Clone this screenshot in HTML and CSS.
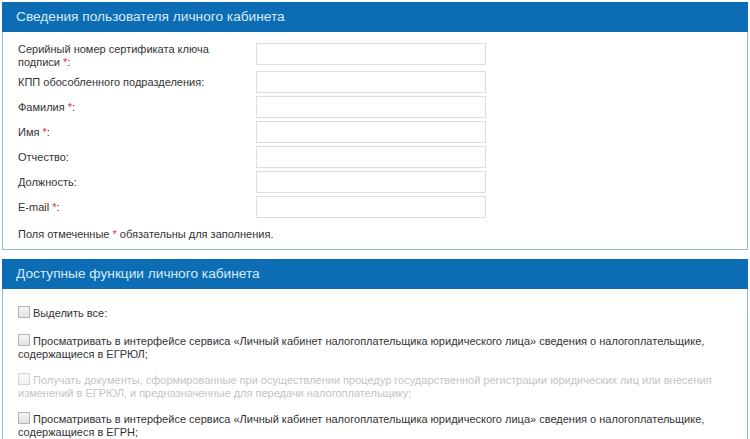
FILE: index.html
```html
<!DOCTYPE html>
<html lang="ru">
<head>
<meta charset="utf-8">
<link rel="stylesheet" href="styles.css">
</head>
<body>
<section class="panel">
  <div class="panel-head">Сведения пользователя личного кабинета</div>
  <div class="panel-body form">
    <div class="row row-top">
      <label class="lbl">Серийный номер сертификата ключа подписи <span class="req">*</span>:</label>
      <input class="inp" type="text">
    </div>
    <div class="row">
      <label class="lbl">КПП обособленного подразделения:</label>
      <input class="inp" type="text">
    </div>
    <div class="row">
      <label class="lbl">Фамилия <span class="req">*</span>:</label>
      <input class="inp" type="text">
    </div>
    <div class="row">
      <label class="lbl">Имя <span class="req">*</span>:</label>
      <input class="inp" type="text">
    </div>
    <div class="row">
      <label class="lbl">Отчество:</label>
      <input class="inp" type="text">
    </div>
    <div class="row">
      <label class="lbl">Должность:</label>
      <input class="inp" type="text">
    </div>
    <div class="row">
      <label class="lbl">E-mail <span class="req">*</span>:</label>
      <input class="inp" type="text">
    </div>
    <p class="note">Поля отмеченные <span class="req">*</span> обязательны для заполнения.</p>
  </div>
</section>
<section class="panel panel2">
  <div class="panel-head">Доступные функции личного кабинета</div>
  <div class="panel-body funcs">
    <div class="item item-all"><span class="cb"></span>Выделить все:</div>
    <div class="item"><span class="cb"></span>Просматривать в интерфейсе сервиса «Личный кабинет налогоплательщика юридического лица» сведения о налогоплательщике, содержащиеся в ЕГРЮЛ;</div>
    <div class="item disabled"><span class="cb"></span>Получать документы, сформированные при осуществлении процедур государственной регистрации юридических лиц или внесения изменений в ЕГРЮЛ, и предназначенные для передачи налогоплательщику;</div>
    <div class="item"><span class="cb"></span>Просматривать в интерфейсе сервиса «Личный кабинет налогоплательщика юридического лица» сведения о налогоплательщике, содержащиеся в ЕГРН;</div>
  </div>
</section>
</body>
</html>
```
FILE: styles.css
```css
html, body {
  margin: 0;
  padding: 0;
  background: #ffffff;
}
body {
  padding: 2px 2px 0 2px;
  font-family: "Liberation Sans", Arial, sans-serif;
  font-size: 11px;
  color: #333333;
  overflow: hidden;
  height: 437px;
}
.panel {
  border: 1px solid #8fbcd8;
  border-top: none;
  background: #ffffff;
}
.panel2 {
  margin-top: 9px;
}
.panel-head {
  background: #0d6db4;
  color: #d6ebf9;
  font-size: 13.7px;
  height: 30px;
  line-height: 30px;
  padding-left: 14px;
  margin: 0 -1px;
}
.form {
  padding: 11px 0 8px 15px;
  display: flex;
  flex-direction: column;
  gap: 3px;
}
.row {
  display: flex;
  align-items: center;
  min-height: 22px;
}
.row-top {
  align-items: flex-start;
  margin-bottom: -1px;
}
.lbl {
  width: 238px;
  flex: none;
  line-height: 13px;
  padding-top: 1px;
}
.row-top .lbl {
  padding-top: 0;
  width: 200px;
  margin-right: 38px;
}
.req {
  color: #e03030;
}
.inp {
  width: 230px;
  height: 22px;
  box-sizing: border-box;
  border: 1px solid #dedede;
  background: #ffffff;
  margin: 0;
  padding: 0;
  font: inherit;
}
.note {
  margin: 7px 0 0 0;
  line-height: 13px;
}
.funcs {
  padding: 17px 24px 0 15px;
  display: flex;
  flex-direction: column;
  gap: 12px;
  height: 200px;
}
.item {
  line-height: 13px;
}
.item-all {
  margin-bottom: 2px;
}
.cb {
  display: inline-block;
  width: 10px;
  height: 10px;
  border: 1px solid #b4b4b4;
  background: linear-gradient(#f6f6f6, #e0e0e0);
  margin-right: 3px;
  vertical-align: -1px;
}
.disabled {
  color: #c4c4c4;
}
.disabled .cb {
  border-color: #d6d6d6;
  background: linear-gradient(#fafafa, #efefef);
}
```
